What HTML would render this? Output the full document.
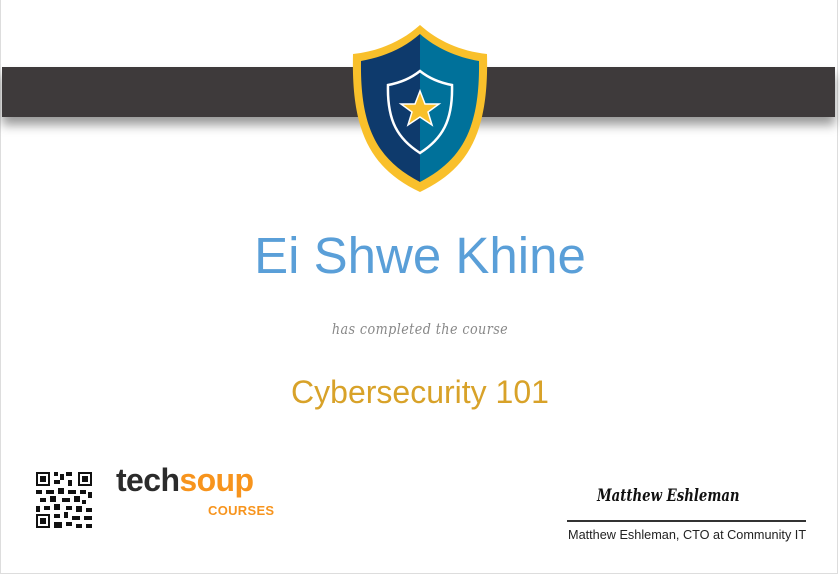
<!DOCTYPE html>
<html><head><style>
body{margin:0;width:840px;height:575px;background:#fff;position:relative;overflow:hidden;font-family:"Liberation Sans",sans-serif}
.frame{position:absolute;left:0;top:0;width:836px;height:573px;border:1px solid #ddd;border-top:none}
.bar{position:absolute;left:2px;top:67px;width:833px;height:50px;background:#3e3a3b;box-shadow:0 8px 10px rgba(0,0,0,.4)}
.t{position:absolute;left:0;width:840px;text-align:center}
</style></head><body>
<div class="frame"></div>
<div class="bar"></div>
<svg style="position:absolute;left:350px;top:24px" width="140" height="170" viewBox="0 0 140 170">
<path d="M70 1 C52 17 30 27 3 30 C1 110 22 145 70 168 C118 145 139 110 137 30 C110 27 88 17 70 1Z" fill="#f9c02b"/>
<path d="M70 10 C54 24 34 33 11 37 C10 105 28 136 70 158 Z" fill="#0e3a6c"/>
<path d="M70 10 C86 24 106 33 129 37 C130 105 112 136 70 158 Z" fill="#00719a"/>
<path d="M70 47 C60 55 49 59 38 61 C37 97 48 115 70 129 C92 115 103 97 102 61 C91 59 80 55 70 47Z" fill="none" stroke="#fff" stroke-width="2.5"/>
<path d="M70 67 L75 80 L89 80 L78 88 L82 101 L70 93 L58 101 L62 88 L51 80 L65 80Z" fill="#f9c02b" stroke="#fff" stroke-width="1.5"/>
</svg>
<div class="t" style="top:226px;font-size:51px;color:#5a9fd8">Ei Shwe Khine</div>
<div class="t" style="top:320px;font-size:15px;font-style:italic;color:#888;font-family:'DejaVu Serif',serif;letter-spacing:.5px;transform:scaleX(.85)">has completed the course</div>
<div class="t" style="top:374px;font-size:32px;color:#d8a229">Cybersecurity 101</div>
<svg style="position:absolute;left:36px;top:472px" width="56" height="56" viewBox="0 0 28 28">
<g fill="#111"><path d="M0 0h7v7h-7zM21 0h7v7h-7zM0 21h7v7h-7z"/></g>
<g fill="#fff"><path d="M1 1h5v5h-5zM22 1h5v5h-5zM1 22h5v5h-5z"/></g>
<g fill="#111"><path d="M2 2h3v3h-3zM23 2h3v3h-3zM2 23h3v3h-3z"/>
<path d="M9 0h2v2h-2zM12 1h2v3h-2zM15 0h3v2h-3zM9 4h3v2h-3zM16 4h2v3h-2zM0 9h3v2h-3zM5 9h4v2h-4zM11 8h3v3h-3zM16 9h4v2h-4zM22 9h3v2h-3zM26 10h2v3h-2zM2 13h3v2h-3zM7 12h3v3h-3zM13 13h4v2h-4zM19 12h3v3h-3zM23 14h2v2h-2zM0 17h2v3h-2zM4 17h3v2h-3zM9 16h3v3h-3zM15 17h3v2h-3zM20 17h3v3h-3zM25 18h3v2h-3zM9 21h3v2h-3zM14 20h2v3h-2zM18 22h4v2h-4zM24 22h4v2h-4zM9 25h4v3h-4zM15 25h3v2h-3zM20 26h3v2h-3zM25 26h3v2h-3z"/></g>
</svg>
<div style="position:absolute;left:116px;top:462px;font-size:32px;font-weight:bold;letter-spacing:-0.6px;color:#2b2b2b">tech<span style="color:#f7941d">soup</span></div>
<div style="position:absolute;left:208px;top:503px;font-size:13px;font-weight:bold;letter-spacing:0.3px;color:#f7941d">COURSES</div>
<div style="position:absolute;left:597px;top:486px;font-size:17px;font-weight:bold;font-style:italic;font-family:'DejaVu Serif',serif;color:#111;transform:scaleX(.78);transform-origin:left;white-space:nowrap">Matthew Eshleman</div>
<div style="position:absolute;left:567px;top:520px;width:239px;height:2px;background:#333"></div>
<div style="position:absolute;left:568px;top:528px;font-size:12.7px;color:#222;white-space:nowrap">Matthew Eshleman, CTO at Community IT</div>
</body></html>
